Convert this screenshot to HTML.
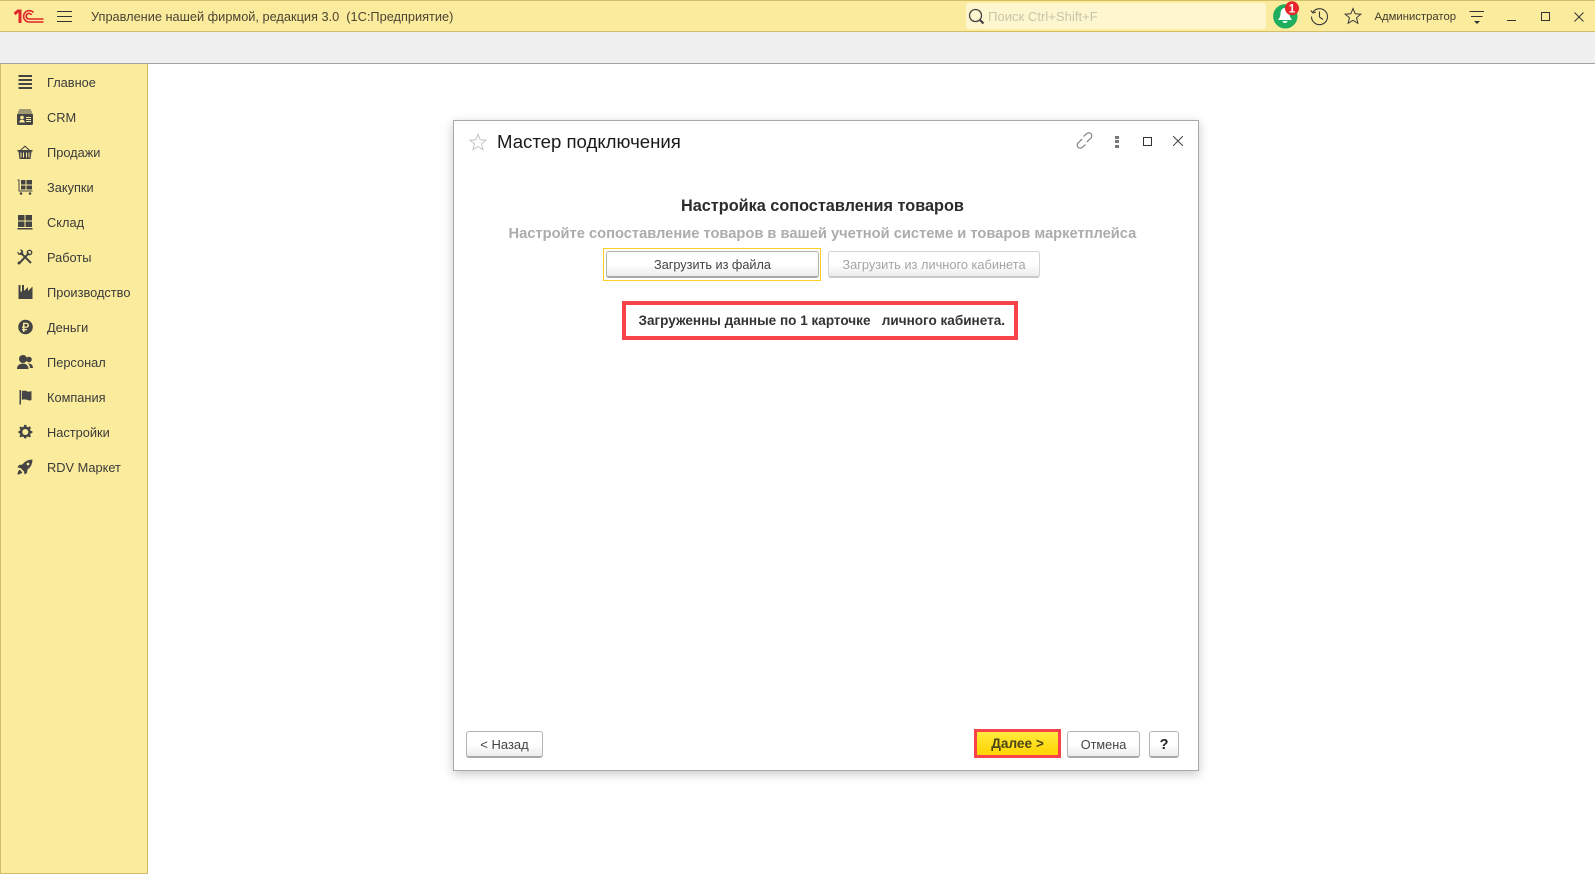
<!DOCTYPE html>
<html lang="ru"><head><meta charset="utf-8"><title>Мастер подключения</title>
<style>
html,body{margin:0;padding:0;width:1595px;height:874px;overflow:hidden;background:#fff;font-family:"Liberation Sans","Noto Sans CJK JP",sans-serif;color:#333}
div,span,svg{position:absolute;box-sizing:border-box}
.t{white-space:pre;line-height:18px;height:18px}
.nav{left:47px;font-size:12.8px;color:#3a3a3a}
.ic{left:17px;width:16px;height:16px;fill:#444;stroke:none}
.btn{height:27px;border:1px solid #b4b4b4;border-bottom:2px solid #a8a8a8;border-radius:3px;background:linear-gradient(#fff,#fff 50%,#ececec);text-align:center;font-size:12.7px;line-height:26px;color:#444;white-space:pre}
</style></head><body>
<!-- top bar -->
<div style="left:0;top:0;width:1595px;height:32px;background:#fbec9d;border-top:1px solid #d1bd68;border-bottom:1px solid #d1bd68"></div>
<div style="left:0;top:32px;width:1595px;height:32px;background:#f0f0f0;border-bottom:1px solid #a3a3a3"></div>
<svg style="left:14px;top:9px" width="30" height="15" viewBox="0 0 30 15" fill="none" stroke="#e0262a"><path d="M0.5 5L4 2H6V14" stroke-width="3"/><path d="M29.5 13H14.5A5.7 5.7 0 1 1 19.5 3.5" stroke-width="1.6"/><path d="M29.5 10H14.7A2.8 2.8 0 1 1 17.5 6" stroke-width="1.6"/></svg>
<svg style="left:57px;top:10px" width="15" height="13" viewBox="0 0 15 13" stroke="#333" stroke-width="1"><path d="M0 1.5H15M0 6.5H15M0 11.5H15"/></svg>
<span class="t" style="left:91px;top:7.5px;font-size:12.77px;color:#4a4433">Управление нашей фирмой, редакция 3.0  (1С:Предприятие)</span>
<div style="left:966px;top:3px;width:300px;height:26px;background:#fdf6cf;border-radius:2px"></div>
<svg style="left:968px;top:8px" width="17" height="18" viewBox="0 0 17 18" fill="none" stroke="#444"><circle cx="7.5" cy="7.5" r="6" stroke-width="1.3"/><path d="M12 12L15.5 15.5" stroke-width="2.2"/></svg>
<span class="t" style="left:988px;top:7.5px;font-size:13.1px;color:#c9c5a8">Поиск Ctrl+Shift+F</span>
<svg style="left:1272px;top:0" width="30" height="30" viewBox="0 0 30 30"><circle cx="13.3" cy="16.3" r="12.2" fill="#1fae5e"/><path d="M13 8C9.5 8 8.7 11 8.5 14C8.3 17 7 18.500 6 20H20C19 18.500 17.700 17 17.500 14C17.300 11 16.500 8 13 8Z" fill="#fff"/><path d="M10.500 21H15.500A2.500 2 0 0 1 10.500 21Z" fill="#fff"/><circle cx="20" cy="8.300" r="7" fill="#e8242b"/><text x="20" y="12.300" text-anchor="middle" font-family="Liberation Sans" font-weight="700" font-size="11.500" fill="#fff">1</text></svg>
<svg style="left:1310px;top:7px" width="19" height="19" viewBox="0 0 19 19" fill="none" stroke="#3a3a3a" stroke-width="1.100"><path d="M3 5A8 8 0 1 1 1.500 9.500"/><path d="M0.800 3.500L3 6L5.800 5"/><path d="M9.500 4.500V10L13 12.500"/></svg>
<svg style="left:1344px;top:7px" width="18" height="18" viewBox="0 0 18 18" fill="none" stroke="#3a3a3a" stroke-width="1"><path d="M9 1.500L11.200 6.800L16.800 7.200L12.500 10.800L13.900 16.300L9 13.300L4.100 16.300L5.500 10.800L1.200 7.200L6.800 6.800Z"/></svg>
<span class="t" style="left:1374.500px;top:7.500px;font-size:11.300px;color:#3f3b2e">Администратор</span>
<svg style="left:1469px;top:9px" width="16" height="16" viewBox="0 0 16 16"><path d="M0.500 2.500H15M2 7.500H13.500" stroke="#333" stroke-width="1"/><path d="M5 12H11L8 15Z" fill="#333"/></svg>
<div style="left:1507px;top:20px;width:9px;height:1px;background:#333"></div>
<div style="left:1541px;top:12px;width:9px;height:9px;border:1px solid #333"></div>
<svg style="left:1574px;top:12px" width="10" height="10" viewBox="0 0 10 10" stroke="#333" stroke-width="1"><path d="M0.500 0.500L9.500 9.500M9.500 0.500L0.500 9.500"/></svg>
<!-- sidebar -->
<div style="left:0;top:64px;width:148px;height:810px;background:#fbec9d;border-left:1px solid #d1bd68;border-right:1px solid #d1bd68;border-bottom:1px solid #d1bd68"></div>
<span class="t nav" style="top:73.500px">Главное</span>
<span class="t nav" style="top:108.500px">CRM</span>
<span class="t nav" style="top:143.500px">Продажи</span>
<span class="t nav" style="top:178.500px">Закупки</span>
<span class="t nav" style="top:213.500px">Склад</span>
<span class="t nav" style="top:248.500px">Работы</span>
<span class="t nav" style="top:283.500px">Производство</span>
<span class="t nav" style="top:318.500px">Деньги</span>
<span class="t nav" style="top:353.500px">Персонал</span>
<span class="t nav" style="top:388.500px">Компания</span>
<span class="t nav" style="top:423.500px">Настройки</span>
<span class="t nav" style="top:458.500px">RDV Маркет</span>
<svg class="ic" style="top:74px" viewBox="0 0 16 16"><path d="M1.500 1H15V3H1.500ZM1.500 5H15V7H1.500ZM1.500 9H15V11H1.500ZM1.500 13H15V15H1.500Z"/></svg>
<svg class="ic" style="top:109px" viewBox="0 0 16 16"><path d="M2 0.500H14V1.500H2ZM1 2.500H15V3.500H1ZM1.500 4.500H14.500Q16 4.500 16 6V14.500Q16 16 14.500 16H1.500Q0 16 0 14.500V6Q0 4.500 1.500 4.500Z"/><circle cx="5" cy="8.500" r="1.800" fill="#fbec9d"/><path d="M2.200 13.500Q2.500 10.800 5 10.800Q7.500 10.800 7.800 13.500ZM9 8H14V9H9ZM9 10H14V11H9ZM9 12H14V13H9Z" fill="#fbec9d"/></svg>
<svg class="ic" style="top:144px" viewBox="0 0 16 16"><path d="M0.500 6H15.500V7.500H14.500L13.500 15H2.500L1.500 7.500H0.500ZM3.500 8.500V13.500H4.500V8.500ZM6 8.500V13.500H7V8.500ZM9 8.500V13.500H10V8.500ZM11.500 8.500V13.500H12.500V8.500Z" fill-rule="evenodd"/><path d="M3 6L8 1.500L13 6H11.500L8 3L4.500 6Z"/></svg>
<svg class="ic" style="top:179px" viewBox="0 0 16 16"><path d="M0.500 0.500H2.500V11.500H15.500V12.500H1.500V1.500H0.500Z"/><path d="M4 1H8.500V5.500H4ZM9.500 1H15V5.500H9.500ZM4 6.500H8.500V10.500H4ZM9.500 6.500H15V10.500H9.500Z"/><circle cx="4" cy="14.500" r="1.300"/><circle cx="13" cy="14.500" r="1.300"/></svg>
<svg class="ic" style="top:214px" viewBox="0 0 16 16"><path d="M1 1H7.500V6.500H1ZM8.500 1H15V6.500H8.500ZM1 7.500H7.500V13H1ZM8.500 7.500H15V13H8.500ZM0.500 14H15.500V15.500H0.500Z"/></svg>
<svg class="ic" style="top:249px" viewBox="0 0 16 16" fill="none"><path d="M4.500 4.500L14 14" stroke="#444" stroke-width="2" fill="none"/><path d="M0.500 2.500L2.500 4.500L4.500 2.500L2.500 0.500Q7 0 6 4.500L4.500 6Q0 6.500 0.500 2.500Z" fill="#444"/><path d="M12 4L2.500 14" stroke="#444" stroke-width="2" fill="none"/><circle cx="12.500" cy="3.500" r="2.200" fill="none" stroke="#444" stroke-width="1.400"/><circle cx="2" cy="14" r="1.500" fill="#444"/></svg>
<svg class="ic" style="top:284px" viewBox="0 0 16 16"><path d="M1.500 15V1H3.500V5H5V1H7V7L11 3V7L15.500 2.500V15Z"/><path d="M3.500 4.500H5V7.500H3.500Z" fill="#fbec9d"/></svg>
<svg class="ic" style="top:319px" viewBox="0 0 16 16"><circle cx="8.500" cy="8" r="7.300"/><path d="M6 3.800H9.500A2.500 2.500 0 0 1 9.500 8.800H7.500V10H10V11.200H7.500V13H6V11.200H5V10H6V8.800H5V7.500H6ZM7.500 5V7.500H9.300A1.250 1.250 0 0 0 9.300 5Z" fill="#fbec9d" fill-rule="evenodd"/></svg>
<svg class="ic" style="top:354px" viewBox="0 0 16 16"><circle cx="6" cy="5" r="4"/><path d="M0 15Q0 10 6 9.500Q11.500 10 11.500 15Z"/><circle cx="12" cy="5.500" r="2.800"/><path d="M11 9.500Q16 9.500 16 14H13Q12.800 11 11 9.500Z"/></svg>
<svg class="ic" style="top:389px" viewBox="0 0 16 16"><path d="M2.500 1H4V15.500H2.500ZM4.800 2Q8 1 10.500 2.500Q12.500 3 14.500 2V11Q12 12 10 10.800Q7.500 10 4.800 10.800Z"/></svg>
<svg class="ic" style="top:424px" viewBox="0 0 16 16"><path d="M6.800 1H9.200L9.600 3L11.200 3.700L13 2.600L14.500 4.200L13.300 6L14 7.500L16 8V10L14 10.500L13.300 12L14.500 13.500L13 15L11.200 13.900L9.600 14.500L9.200 16H6.800L6.400 14.500L4.800 13.900L3 15L1.500 13.500L2.700 12L2 10.500L0.500 10V8L2 7.500L2.700 6L1.500 4.200L3 2.600L4.800 3.700L6.400 3Z" transform="translate(1 0) scale(.9)"/><circle cx="8.300" cy="8" r="3" fill="#fbec9d"/></svg>
<svg class="ic" style="top:459px" viewBox="0 0 16 16"><path d="M15.500 0.500Q15.500 7 10.500 10.500L10 14L7.500 15.500L7 12.500L3.500 9L0.500 8.500L2 6L5.500 5.500Q9 0.500 15.500 0.500Z"/><circle cx="11" cy="5" r="1.400" fill="#fbec9d"/><path d="M2.500 10.500L5.500 13.500Q3 15.500 0.500 15.500Q0.500 13 2.500 10.500Z"/></svg>
<!-- dialog -->
<div style="left:453px;top:120px;width:746px;height:651px;background:#fff;border:1px solid #a9a9a9;box-shadow:0 3px 10px rgba(0,0,0,.22)"></div>
<svg style="left:469px;top:133px" width="18" height="18" viewBox="0 0 18 18" fill="none" stroke="#c3c3c3"><path d="M9 1.200L11.200 6.800L17 7.200L12.500 10.900L14 16.800L9 13.500L4 16.800L5.500 10.900L1 7.200L6.800 6.800Z"/></svg>
<span class="t" style="left:497px;top:131px;height:22px;line-height:22px;font-size:18.600px;color:#1a1a1a">Мастер подключения</span>
<svg style="left:1076px;top:132px" width="17" height="17" viewBox="0 0 17 17" fill="none" stroke="#777" stroke-width="1.100"><path d="M7.500 4.500L10.500 1.800A2.700 2.700 0 0 1 15 6L10.800 10"/><path d="M9.500 12.500L6.500 15.200A2.700 2.700 0 0 1 2 11L6.200 7"/></svg>
<div style="left:1115px;top:136px;width:4px;height:3px;background:#777"></div>
<div style="left:1115px;top:140px;width:4px;height:3px;background:#777"></div>
<div style="left:1115px;top:145px;width:4px;height:3px;background:#777"></div>
<div style="left:1143px;top:137px;width:9px;height:9px;border:1px solid #333"></div>
<svg style="left:1173px;top:136px" width="10" height="10" viewBox="0 0 10 10" stroke="#444" stroke-width="1"><path d="M0 0L10 10M10 0L0 10"/></svg>
<span class="t" style="left:681px;top:196.500px;font-size:16.250px;font-weight:700;color:#2b2b2b">Настройка сопоставления товаров</span>
<span class="t" style="left:508.500px;top:224.500px;font-size:14.680px;font-weight:700;color:#acacac">Настройте сопоставление товаров в вашей учетной системе и товаров маркетплейса</span>
<div style="left:603px;top:248px;width:218px;height:33px;border:1px solid #ffcf24"></div>
<div class="btn" style="left:606px;top:251px;width:213px">Загрузить из файла</div>
<div class="btn" style="left:828px;top:251px;width:212px;font-size:12.800px;color:#a5a5a5;border-color:#d4d4d4;border-bottom-color:#c9c9c9">Загрузить из личного кабинета</div>
<div style="left:622px;top:301px;width:396px;height:39px;border:4px solid #f8434a"></div>
<span class="t" style="left:638.500px;top:311.500px;font-size:13.560px;font-weight:700;color:#333">Загруженны данные по 1 карточке   личного кабинета.</span>
<div class="btn" style="left:466px;top:731px;width:77px;font-size:13px">&lt; Назад</div>
<div style="left:974px;top:729px;width:87px;height:28.500px;border:3.500px solid #f8434a;background:linear-gradient(#ffea3d,#ffd400);text-align:center;font-size:13.600px;font-weight:700;line-height:23px;color:#4d4515;white-space:pre">Далее &gt;</div>
<div class="btn" style="left:1067px;top:731px;width:73px">Отмена</div>
<div class="btn" style="left:1149px;top:731px;width:30px;font-size:14.500px;font-weight:700;color:#222">?</div>
</body></html>
